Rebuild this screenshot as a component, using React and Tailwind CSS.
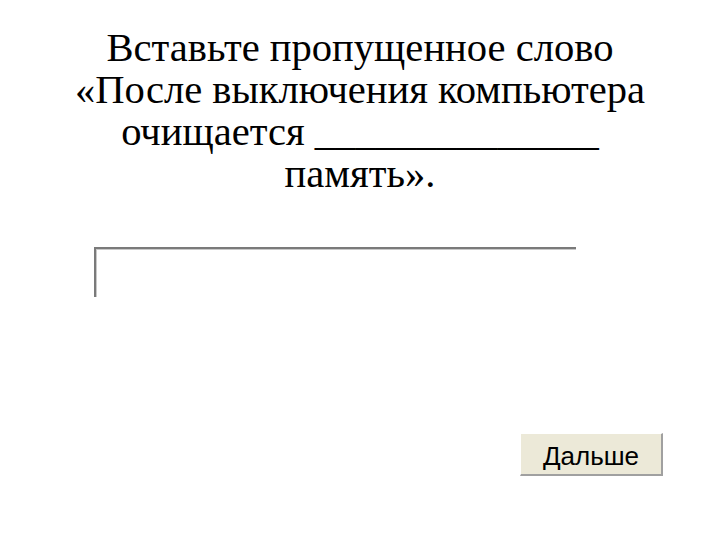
export default function App() {
  return (
    <div className="w-[720px] h-[540px] bg-white flex flex-col items-center overflow-hidden">
      <div
        className="mt-[27px] text-center text-black text-[40.6px] leading-[42px] whitespace-nowrap"
        style={{ fontFamily: '"Liberation Serif", "Times New Roman", serif' }}
      >
        <div>Вставьте пропущенное слово</div>
        <div>«После выключения компьютера</div>
        <div>очищается ______________</div>
        <div>память».</div>
      </div>
      <div className="w-full flex flex-col flex-1">
        <div className="ml-[94px] mt-[52px] w-[482px] h-[50px] border-t-2 border-l-2 border-t-[#7a7a7a] border-l-[#7a7a7a]">
          <div className="h-full border-t border-l border-[#c8c8c8]"></div>
        </div>
        <div className="flex justify-end pr-[57px] mt-[136px]">
          <button
            className="w-[143px] h-[43px] pt-[3px] bg-[#ece9d8] border-t border-l border-b-2 border-r-2 border-t-white border-l-white border-b-[#a0a0a0] border-r-[#a0a0a0] text-[26px] leading-none text-black flex items-center justify-center"
            style={{ fontFamily: '"Liberation Sans", Arial, sans-serif' }}
          >
            Дальше
          </button>
        </div>
      </div>
    </div>
  );
}
